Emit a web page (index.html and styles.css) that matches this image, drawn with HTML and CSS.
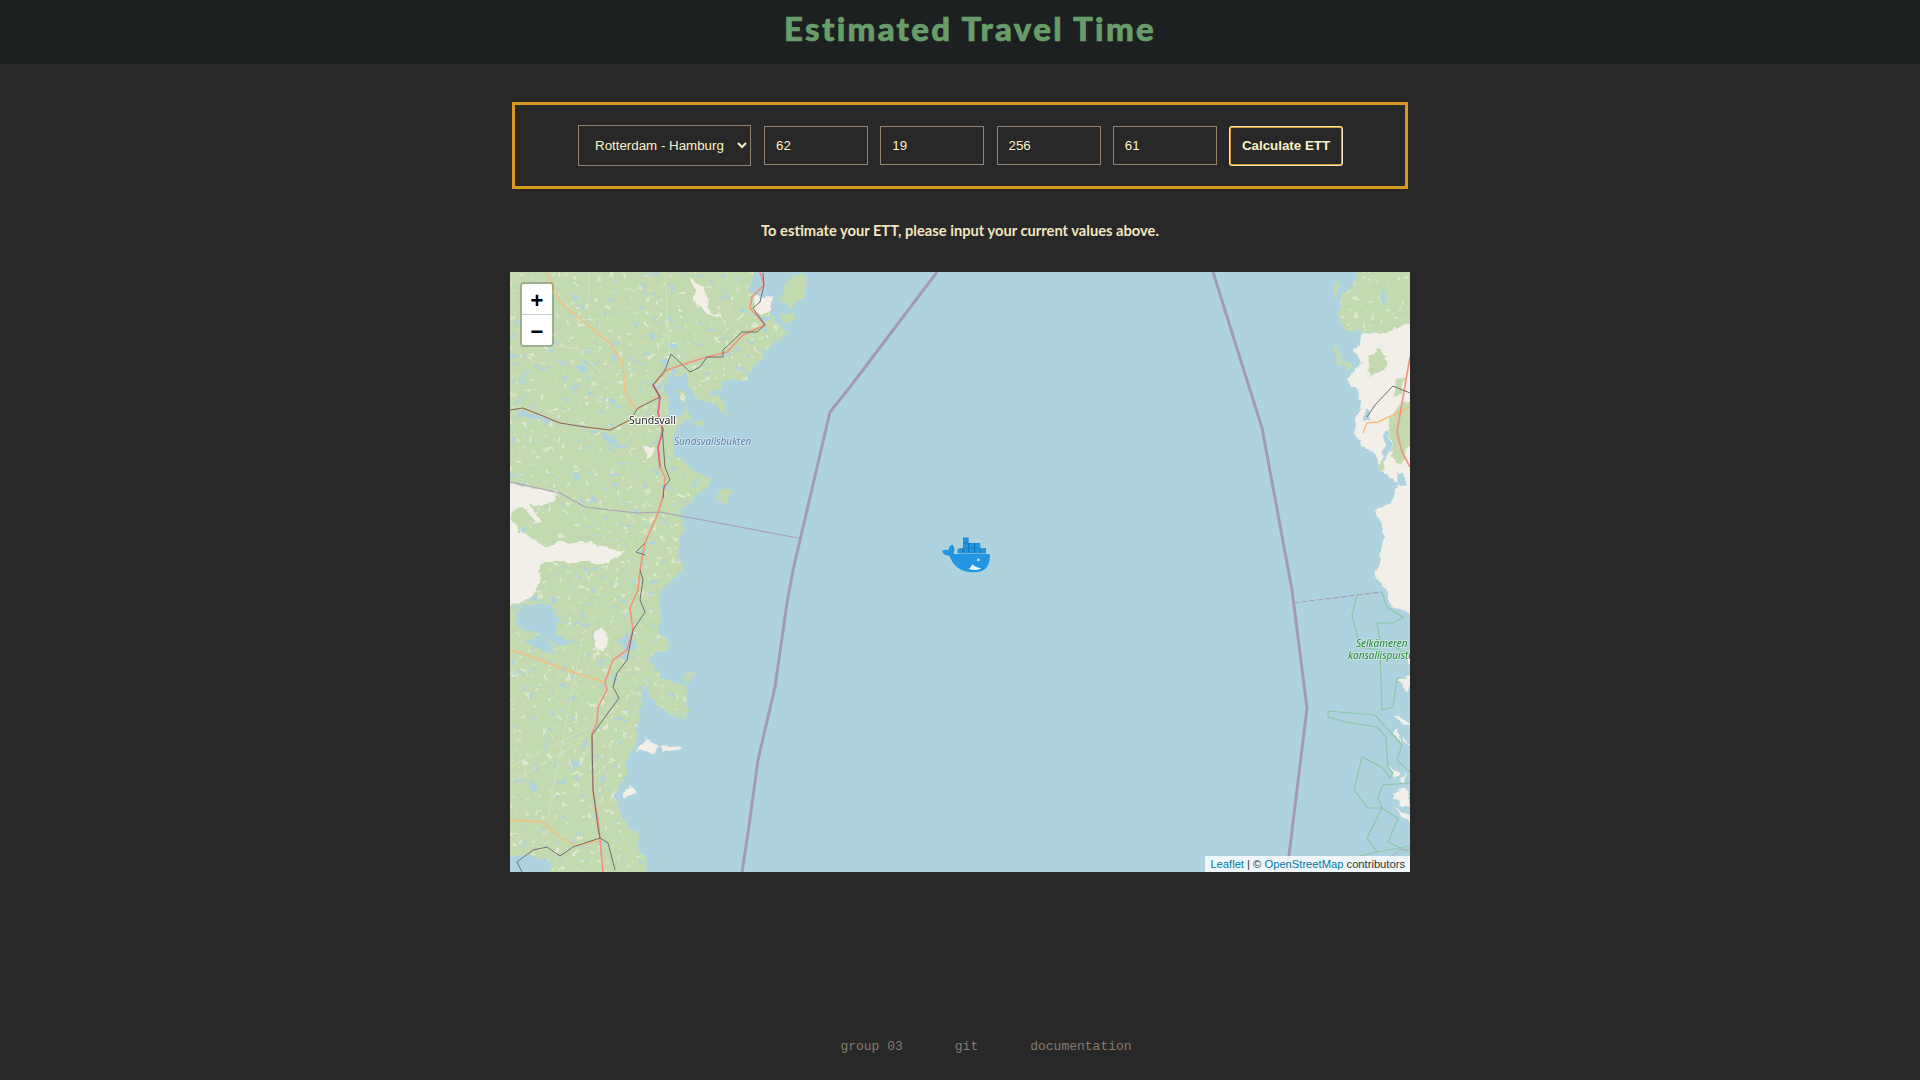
FILE: index.html
```html
<!DOCTYPE html>
<html>
<head>
  <meta charset="UTF-8">
  <title>Estimated Travel Time</title>
  <link rel="stylesheet" href="styles.css">
</head>
<body>
  <div class="header">
    <h1>Estimated Travel Time</h1>
  </div>

  <form class="ett-form">
    <select class="route-select">
      <option>Rotterdam - Hamburg</option>
    </select>
    <input class="value-input" type="text" value="62">
    <input class="value-input" type="text" value="19">
    <input class="value-input" type="text" value="256">
    <input class="value-input" type="text" value="61">
    <button class="calculate" type="button">Calculate ETT</button>
  </form>

  <p class="hint">To estimate your ETT, please input your current values above.</p>

  <div class="map">
    <svg class="map-art" viewBox="0 0 900 600" width="900" height="600">
      <defs>
        <filter id="rough" x="-5%" y="-5%" width="110%" height="110%" color-interpolation-filters="sRGB">
          <feTurbulence type="fractalNoise" baseFrequency="0.07" numOctaves="3" seed="4" result="noise"/>
          <feDisplacementMap in="SourceGraphic" in2="noise" scale="11" xChannelSelector="R" yChannelSelector="G"/>
        </filter>
        <filter id="specks" x="0" y="0" width="100%" height="100%" color-interpolation-filters="sRGB">
          <feTurbulence type="fractalNoise" baseFrequency="0.16" numOctaves="3" seed="7" result="noise"/>
          <feColorMatrix in="noise" type="matrix" values="0 0 0 0 0  0 0 0 0 0  0 0 0 0 0  10 0 0 0 -6.5" result="mask"/>
          <feComposite in="SourceGraphic" in2="mask" operator="in"/>
        </filter>
        <filter id="lakes" x="0" y="0" width="100%" height="100%" color-interpolation-filters="sRGB">
          <feTurbulence type="fractalNoise" baseFrequency="0.1 0.16" numOctaves="2" seed="21" result="noise"/>
          <feColorMatrix in="noise" type="matrix" values="0 0 0 0 0  0 0 0 0 0  0 0 0 0 0  0 12 0 0 -7.9" result="mask"/>
          <feComposite in="SourceGraphic" in2="mask" operator="in"/>
        </filter>
        <path id="land-west" d="M-20 -20H247L240 20 250 30 262 45 278 60 255 80 235 108 213 108 207 122 213 132 220 145 200 132 187 128 173 105 160 102 157 115 173 122 182 145 163 158 163 175 177 195 205 208 183 228 170 238 173 258 167 281 173 298 157 311 147 325 152 348 147 361 162 375 137 385 155 405 178 413 175 446 163 445 140 425 132 415 130 445 127 455 123 475 117 488 117 501 103 525 113 548 130 565 127 575 137 588 133 620H-20Z"/>
        <path id="land-east" d="M838 -20 847 5 830 31 827 41 832 55 852 65 920 48V-20Z"/>
      </defs>

      <rect width="900" height="600" fill="#aed3df"/>

      <!-- swedish coast -->
      <g filter="url(#rough)">
        <use href="#land-west" class="forest"/>
        <use href="#land-west" class="speck-light" filter="url(#specks)"/>
        <use href="#land-west" class="water" filter="url(#lakes)"/>
        <path class="forest" d="M276 8 285 2 296 8 296 22 282 36 270 30ZM270 42 285 40 284 50 275 48ZM183 150 192 145 194 152 186 155ZM210 218 221 214 216 232 209 230ZM172 405 178 404 186 401 180 410Z"/>
        <path class="bare" d="M-20 207 47 221 43 231 20 231 30 251 10 255 33 275 73 268 113 281 100 291 30 291 30 298H28V321L13 330 -20 341ZM183 8 192 14 200 40 213 46 196 42 183 26ZM244 25 265 27 262 40 246 40ZM86 360 94 352 98 366 92 378 84 380ZM135 172 145 178 137 188ZM136 470 150 472 145 480 125 478ZM152 472 171 476 170 480 155 478 153 481ZM134 468 137 470 139 475 136 474ZM143 470 146 472 146 476 143 474ZM112 520 122 516 126 522 112 526Z"/>
        <path class="forest" d="M2 243 16 238 24 250 8 258ZM28 246 45 236 70 250 50 262 34 262Z"/>
        <path class="water" d="M3 348 13 335 37 331 50 345 43 361 63 371 50 375 30 360 15 360ZM30 360 45 375 33 378 15 368ZM150 110 165 118 178 140 160 148 158 125ZM160 103 175 103 180 120 170 118ZM120 176 108 178 96 170 92 160 108 172ZM14 136 48 150 30 148 6 143ZM240 40 258 46 262 52 250 50ZM108 370 122 360 128 376 115 380ZM10 582 40 590 35 620H-20V590Z"/>
      </g>
      <path class="trail" d="M79 0V40M50 60 100 110M155 0 160 90M20 70 90 80M0 510 70 470M72 368 38 545M0 495 80 455"/>

      <!-- finnish coast -->
      <g filter="url(#rough)">
        <path class="bare" d="M920 48 852 65 843 78 850 91 837 108 847 121 852 131 843 151 850 170 862 178 873 203 888 211 880 231 867 238 875 265 867 298 873 316 883 335 920 350Z"/>
        <use href="#land-east" class="forest"/>
        <use href="#land-east" class="speck-light" filter="url(#specks)"/>
        <path class="forest" d="M824 8 830 12 828 26 822 24ZM825 75 832 80 834 92 826 94ZM835 86 844 94 838 98ZM857 85 868 76 877 84 873 98 862 104 856 98ZM880 148 890 132 920 125V148L890 190 883 186ZM882 124 888 108 895 104 892 122ZM868 190 874 186 876 198 870 200Z"/>
        <path class="water" d="M870 18 876 18 878 30 871 34ZM855 135 860 135 862 150 854 150ZM876 158 880 156 882 180 872 190ZM885 200 892 200 896 215 888 216Z"/>
        <path class="bare" d="M890 378 900 384V392ZM893 460 900 478 894 470ZM882 442 895 448 900 456 890 452ZM885 408 900 404V420ZM882 460 888 456 890 468ZM880 495 890 502 884 508ZM882 520 890 516 896 520 900 534 890 534ZM885 535 900 542V552ZM890 506 898 500 894 512Z"/>
      </g>

      <!-- borders -->
      <polyline class="border-thin" points="0,210 50,221 75,235 100,238 127,241 150,240 288,266"/>
      <polyline class="border-thin dashed" points="783,331 847,323 872,320"/>
      <polyline class="border-sea" points="427,0 340,115 320,140 283,298 277,331 265,415 248,488 238,561 232,600"/>
      <polyline class="border-sea" points="703,0 752,156 782,318 797,436 777,600"/>

      <!-- national park -->
      <path class="park" d="M847 323 842 343 850 375 870 378 872 438 883 435 887 406 897 406M872 320 877 335 893 345 883 351 867 351 870 368 897 381M818 439 865 443 892 473 887 488 900 500M818 439 818 445 835 450 867 455 876 465 878 495 883 501 880 506 873 496 852 485 844 518 858 536 872 536 857 566 867 580 847 585 857 600M872 536 868 525 873 513 900 511M872 536 888 546 878 570 900 581M867 580 900 574"/>

      <!-- roads -->
      <polyline class="road-small" points="37,0 50,30 100,71 113,91 115,121 127,138 148,124"/>
      <polyline class="road-small" points="0,378 17,383 43,393 63,400 95,410"/>
      <polyline class="road-small" points="0,548 33,550 50,565 67,574 90,568"/>
      <polyline class="road-small" points="0,138 13,136 50,151 75,155 100,158 120,148"/>
      <polyline class="road-small" points="853,161 857,151 868,150 900,135"/>
      <polyline class="road-main" points="250,0 254,13 242,25 240,36 255,53 233,63 217,80 190,87 157,98 143,113 150,125 148,141 153,158 148,175 150,195 155,205 153,225 148,241 135,271 130,298 128,318 120,336 123,358 117,378 103,388 95,410 97,418 88,435 87,451 82,461 82,485 83,518 88,548 90,568 93,600"/>
      <polyline class="road-pink" points="143,113 150,125 148,141 153,158 148,175 150,195"/>
      <polyline class="road-main" points="900,85 887,160 892,180 900,195"/>
      <path class="rail" d="M253 1 254 13 250 30 243 36 255 53 247 60 232 60 213 78 213 85 197 85 190 95 180 100 161 82 155 98 143 113 150 125 128 136 120 148 100 158 75 155 50 151 13 136 0 138M152 155 155 195 160 208 154 215 153 226M130 298 133 308 130 328 135 340 123 358 117 388 107 401 103 415 109 426 95 445 82 463 83 518 88 556 90 566 98 571 105 598M90 566 63 575 50 584 37 575 23 578 7 590 12 600M135 271 126 280 135 283M857 145 865 133 883 114 900 121"/>
      <path class="rail thin" d="M873 592 880 585 890 578 900 577"/>

      <!-- labels -->
      <text class="label-city" x="119" y="152">Sundsvall</text>
      <text class="label-bay" x="164" y="173">Sundsvallsbukten</text>
      <text class="label-park" x="846" y="375">Selkämeren</text>
      <text class="label-park" x="838" y="387">kansallispuisto</text>
    </svg>

    <div class="zoom-control">
      <a class="zoom-in">+</a>
      <a class="zoom-out">&#x2212;</a>
    </div>

    <svg class="ship" viewBox="0 0 24 18" width="48" height="36">
      <g transform="translate(24 -3) scale(-1 1)">
        <rect x="2" y="8.7" width="13.4" height="2.4" fill="#0d6fb4"/>
        <rect x="4.9" y="6" width="8.5" height="2.8" fill="#0d6fb4"/>
        <rect x="10.8" y="3.3" width="2.6" height="2.8" fill="#0d6fb4"/>
        <path class="whale" d="M13.983 11.078h2.119a.186.186 0 00.186-.185V9.006a.186.186 0 00-.186-.186h-2.119a.185.185 0 00-.185.185v1.888c0 .102.083.185.185.185m-2.954-5.43h2.118a.186.186 0 00.186-.186V3.574a.186.186 0 00-.186-.185h-2.118a.185.185 0 00-.185.185v1.888c0 .102.082.185.185.186m0 2.716h2.118a.187.187 0 00.186-.186V6.29a.186.186 0 00-.186-.185h-2.118a.185.185 0 00-.185.185v1.887c0 .102.082.185.185.186m-2.93 0h2.12a.186.186 0 00.184-.186V6.29a.185.185 0 00-.185-.185H8.1a.185.185 0 00-.185.185v1.887c0 .102.083.185.185.186m-2.964 0h2.119a.186.186 0 00.185-.186V6.29a.185.185 0 00-.185-.185H5.136a.186.186 0 00-.186.185v1.887c0 .102.084.185.186.186m5.893 2.715h2.118a.186.186 0 00.186-.185V9.006a.186.186 0 00-.186-.186h-2.118a.185.185 0 00-.185.185v1.888c0 .102.082.185.185.185m-2.93 0h2.12a.185.185 0 00.184-.185V9.006a.185.185 0 00-.184-.186h-2.12a.185.185 0 00-.184.185v1.888c0 .102.083.185.185.185m-2.964 0h2.119a.185.185 0 00.185-.185V9.006a.185.185 0 00-.184-.186h-2.12a.186.186 0 00-.186.186v1.887c0 .102.084.185.186.185m-2.92 0h2.12a.185.185 0 00.184-.185V9.006a.185.185 0 00-.184-.186h-2.12a.185.185 0 00-.184.185v1.888c0 .102.082.185.185.185M23.763 9.89c-.065-.051-.672-.51-1.954-.51-.338.001-.676.03-1.01.087-.248-1.7-1.653-2.53-1.716-2.566l-.344-.199-.226.327c-.284.438-.49.922-.612 1.43-.23.97-.09 1.882.403 2.661-.595.332-1.55.413-1.744.42H.751a.751.751 0 00-.75.748 11.376 11.376 0 00.692 4.062c.545 1.428 1.355 2.48 2.41 3.124 1.18.723 3.1 1.137 5.275 1.137.983.003 1.963-.086 2.93-.266a12.248 12.248 0 003.823-1.389c.98-.567 1.86-1.288 2.61-2.136 1.252-1.418 1.998-2.997 2.553-4.4h.221c1.372 0 2.215-.549 2.68-1.009.309-.293.55-.65.707-1.046l.098-.288Z"/>
        <path d="M4.3 18.6c1.6-.2 3.4-.9 4.6-2 .2.9 1 1.9 1.8 2.3-2.1.9-4.8.8-6.4-.3Z" fill="#e8f4fa"/>
        <circle cx="5.8" cy="14.4" r=".7" fill="#cfe8f5"/>
      </g>
    </svg>

    <div class="attribution">
      <a>Leaflet</a> | © <a>OpenStreetMap</a> contributors
    </div>
  </div>

  <div class="footer">
    <a>group 03</a>
    <a>git</a>
    <a>documentation</a>
  </div>
</body>
</html>
```

FILE: styles.css
```css
:root {
  --background: #282828;
  --header: #1d2021;
  --title: #689d6a;
  --cream: #f2e5bc;
  --amber: #d79921;
  --input-border: #928374;
  --footer-text: #857a6c;
}

body {
  margin: 0;
  height: 1080px;
  overflow: hidden;
  background: var(--background);
  color: var(--cream);
  font-family: 'Liberation Sans', Arial, sans-serif;
}

.header {
  height: 64px;
  background: var(--header);
  display: flex;
  justify-content: center;
  padding-left: 20px;
}

.header h1 {
  margin: 0;
  padding-top: 9px;
  font-family: Lato, sans-serif;
  font-size: 33px;
  line-height: 38px;
  font-weight: 900;
  letter-spacing: 2.3px;
  -webkit-text-stroke: 0.7px var(--title);
  color: var(--title);
}

.ett-form {
  box-sizing: border-box;
  width: 896px;
  height: 87px;
  margin: 38px auto 0;
  padding-left: 1px;
  border: 3px solid var(--amber);
  display: flex;
  align-items: center;
  justify-content: center;
  gap: 12.25px;
}

.route-select {
  width: 173px;
  height: 41px;
  margin-right: 0.75px;
  padding: 0 8px 0 12px;
  background: var(--background);
  color: #fbf1c7;
  border: 1px solid var(--input-border);
  border-radius: 0;
  font-family: inherit;
  font-size: 13.33px;
}

.value-input {
  box-sizing: border-box;
  width: 104px;
  height: 39px;
  padding: 0 11px;
  background: var(--background);
  color: #fbf1c7;
  border: 1px solid var(--input-border);
  border-radius: 0;
  font-family: inherit;
  font-size: 13.33px;
}

.calculate {
  box-sizing: border-box;
  width: 114px;
  height: 40px;
  padding: 0;
  background: var(--background);
  color: #fbf1c7;
  border: 2px solid var(--amber);
  border-radius: 3px;
  outline: 1px solid #f5e6c4;
  outline-offset: -1px;
  font-family: inherit;
  font-size: 13.33px;
  font-weight: 700;
}

.hint {
  margin: 32px 0 0;
  height: 18px;
  text-align: center;
  font-family: Lato, sans-serif;
  font-size: 14.7px;
  line-height: 18px;
  font-weight: 700;
}

.map {
  position: relative;
  width: 900px;
  height: 600px;
  margin: 33px 0 0 510px;
  overflow: hidden;
}

.map-art {
  display: block;
  filter: blur(0.4px);
}

.forest { fill: #c3dab0; }
.bare { fill: #f2efe9; }
.water { fill: #aed3df; }
.speck-light { fill: #dfe9d0; }
.trail { fill: none; stroke: #d6e3c2; stroke-width: 0.8; }

.border-sea {
  fill: none;
  stroke: #a49ab6;
  stroke-width: 3;
  stroke-linejoin: round;
}

.border-thin {
  fill: none;
  stroke: #a89fb8;
  stroke-width: 1.2;
}

.border-thin.dashed { stroke-dasharray: 6 2; }

.park {
  fill: none;
  stroke: #8cc7a6;
  stroke-width: 1.2;
}

.road-main {
  fill: none;
  stroke: #f4917c;
  stroke-width: 1.6;
  stroke-linejoin: round;
}

.road-pink {
  fill: none;
  stroke: #e8608a;
  stroke-width: 1.6;
}

.road-small {
  fill: none;
  stroke: #f7bd7f;
  stroke-width: 1.4;
  stroke-linejoin: round;
}

.rail {
  fill: none;
  stroke: #6f6f6f;
  stroke-width: 1;
}

.rail.thin { stroke: #b3a6bf; }

.label-city,
.label-bay,
.label-park {
  font-family: 'Noto Sans', sans-serif;
  paint-order: stroke;
  stroke-linejoin: round;
}

.label-city {
  font-size: 10.5px;
  fill: #222;
  stroke: #fff;
  stroke-width: 2;
}

.label-bay {
  font-size: 10px;
  font-style: italic;
  fill: #5f7fa8;
  stroke: #d2e6ee;
  stroke-width: 1.5;
}

.label-park {
  font-size: 10px;
  font-style: italic;
  fill: #1f8a2a;
  stroke: #d2e6ee;
  stroke-width: 1.5;
}

.zoom-control {
  position: absolute;
  top: 10px;
  left: 10px;
  border: 2px solid rgba(0, 0, 0, 0.2);
  border-radius: 4px;
  background-clip: padding-box;
}

.zoom-control a {
  display: block;
  width: 30px;
  height: 30px;
  background: #fff;
  color: #000;
  text-align: center;
  font: bold 22px/33px 'Liberation Sans', sans-serif;
  overflow: hidden;
}

.zoom-in {
  border-bottom: 1px solid #ccc;
  border-radius: 2px 2px 0 0;
}

.zoom-out { border-radius: 0 0 2px 2px; }

.ship {
  position: absolute;
  left: 432px;
  top: 265px;
}

.whale { fill: #2396e3; }

.attribution {
  position: absolute;
  right: 0;
  bottom: 0;
  height: 16px;
  padding: 0 5px;
  background: rgba(255, 255, 255, 0.8);
  color: #333;
  font-size: 11.2px;
  line-height: 16px;
  white-space: nowrap;
}

.attribution a { color: #0078a8; }

.footer {
  display: flex;
  justify-content: center;
  gap: 52px;
  padding: 167px 0 0 52px;
  font-family: 'Liberation Mono', 'Courier New', monospace;
  font-size: 13px;
  line-height: 16px;
  color: var(--footer-text);
}
```
